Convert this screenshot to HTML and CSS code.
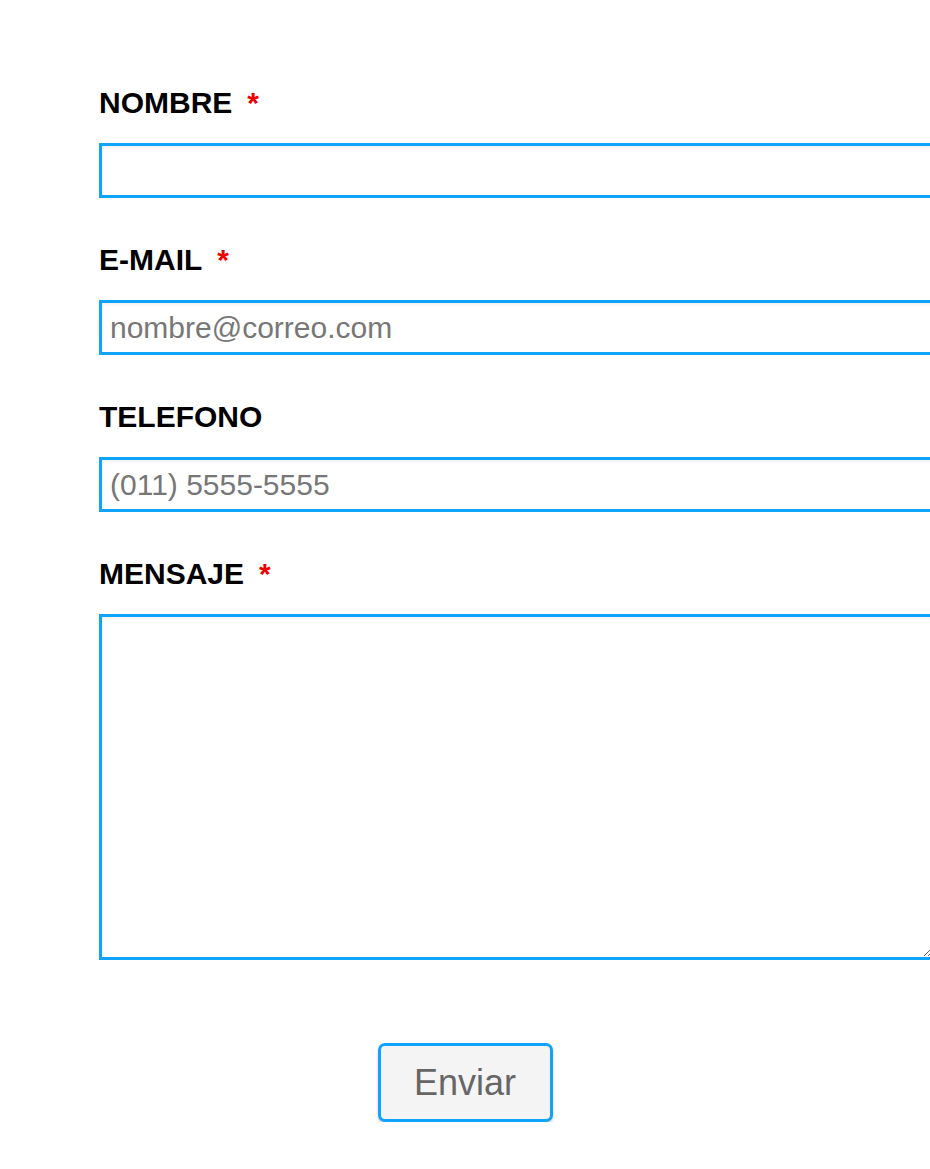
FILE: index.html
```html
<!DOCTYPE html>
<html lang="es">
<head>
<meta charset="utf-8">
<title>Contacto</title>
<link rel="stylesheet" href="styles.css">
</head>
<body>
<form class="contact-form">
  <div class="field">
    <label class="field-label" for="nombre">NOMBRE<span class="req">*</span></label>
    <input class="field-input" id="nombre" type="text">
  </div>
  <div class="field">
    <label class="field-label" for="email">E-MAIL<span class="req">*</span></label>
    <input class="field-input" id="email" type="email" placeholder="nombre@correo.com">
  </div>
  <div class="field">
    <label class="field-label" for="tel">TELEFONO</label>
    <input class="field-input" id="tel" type="tel" placeholder="(011) 5555-5555">
  </div>
  <div class="field field-last">
    <label class="field-label" for="msg">MENSAJE<span class="req">*</span></label>
    <textarea class="field-input field-textarea" id="msg"></textarea>
  </div>
  <div class="actions">
    <button class="submit" type="button">Enviar</button>
  </div>
</form>
</body>
</html>
```

FILE: styles.css
```css
html, body {
  margin: 0;
  padding: 0;
  overflow: hidden;
  background: #ffffff;
}

body {
  font-family: "Liberation Sans", Arial, sans-serif;
  width: 930px;
}

.contact-form {
  padding: 86px 0 0 99px;
  display: flex;
  flex-direction: column;
}

.field {
  display: flex;
  flex-direction: column;
  margin-bottom: 45px;
}

.field-last {
  margin-bottom: 0;
}

.field-label {
  font-size: 30px;
  font-weight: bold;
  color: #000;
  line-height: 34px;
  margin-bottom: 23px;
}

.req {
  color: #ee0000;
  margin-left: 15px;
}

.field-input {
  box-sizing: border-box;
  width: 836px;
  height: 55px;
  border: 3px solid #0fa3fb;
  border-radius: 0;
  padding: 0 8px;
  font-family: "Liberation Sans", Arial, sans-serif;
  font-size: 30px;
  color: #333;
  background: #fff;
  box-shadow: inset 0 2px 3px rgba(0, 0, 0, 0.06);
  outline: none;
  margin: 0;
}

.field-input::placeholder {
  color: #777777;
  opacity: 1;
}

.field-textarea {
  height: 346px;
  resize: both;
  padding: 8px;
}

.actions {
  display: flex;
  justify-content: center;
  margin-left: -99px;
  margin-top: 83px;
}

.submit {
  box-sizing: border-box;
  width: 175px;
  height: 79px;
  font-family: "Liberation Sans", Arial, sans-serif;
  font-size: 36px;
  color: #666666;
  background: #f4f4f4;
  border: 3px solid #0fa3fb;
  border-radius: 7px;
  box-shadow: 0 2px 3px rgba(0, 0, 0, 0.2);
  padding: 0;
  cursor: pointer;
}
```
